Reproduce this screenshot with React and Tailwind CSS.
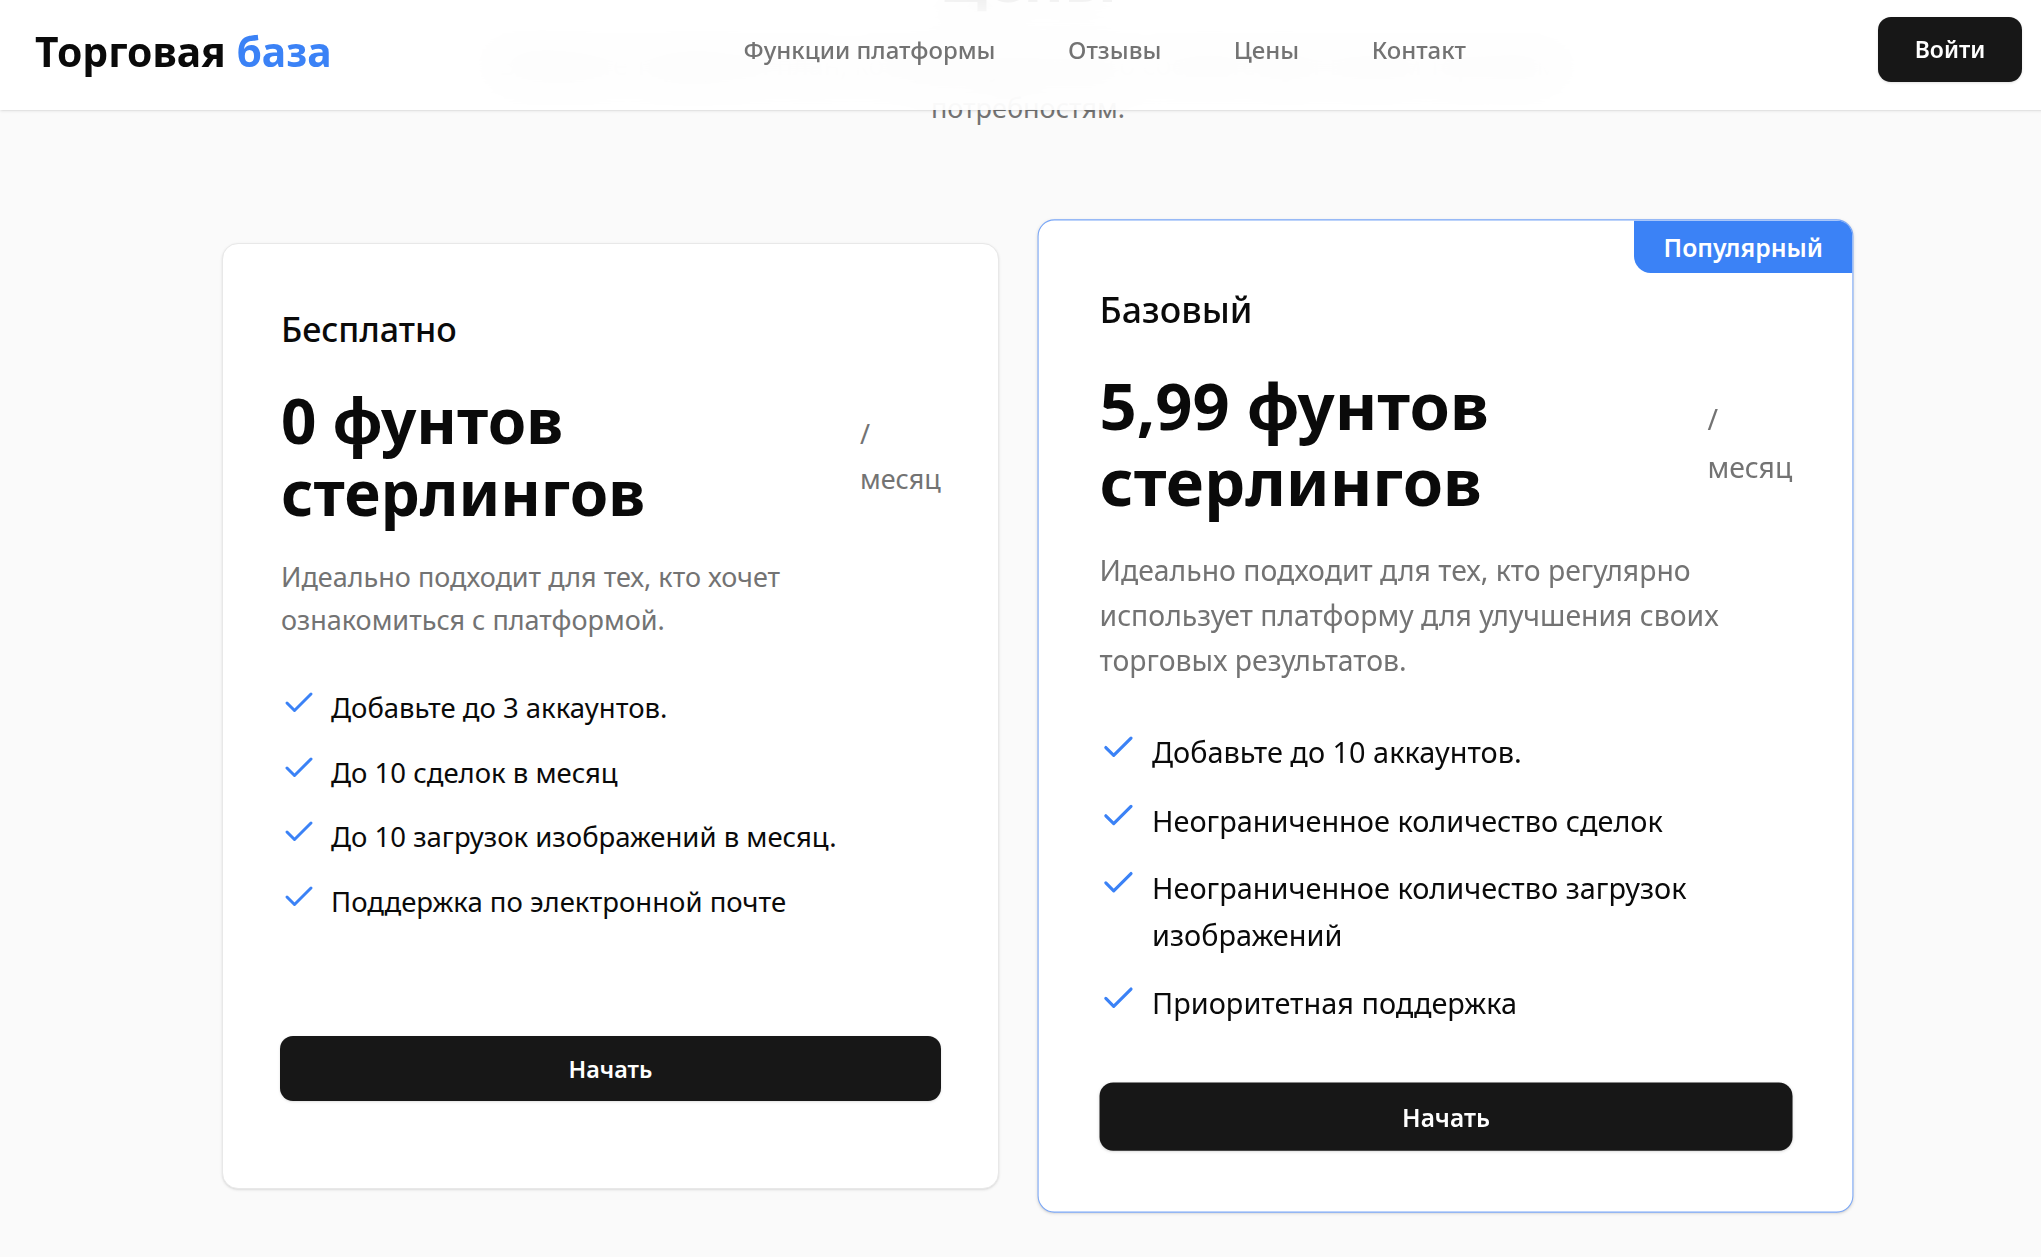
import { Check } from "lucide-react"

const navItems = ["Функции платформы", "Отзывы", "Цены", "Контакт"]

const plans = [
  {
    title: "Бесплатно",
    price: "0 фунтов стерлингов",
    description: "Идеально подходит для тех, кто хочет ознакомиться с платформой.",
    features: [
      "Добавьте до 3 аккаунтов.",
      "До 10 сделок в месяц",
      "До 10 загрузок изображений в месяц.",
      "Поддержка по электронной почте",
    ],
  },
  {
    title: "Базовый",
    price: "5,99 фунтов стерлингов",
    description: "Идеально подходит для тех, кто регулярно использует платформу для улучшения своих торговых результатов.",
    features: [
      "Добавьте до 10 аккаунтов.",
      "Неограниченное количество сделок",
      "Неограниченное количество загрузок изображений",
      "Приоритетная поддержка",
    ],
    popular: true,
  },
]

function PlanCard({ plan }) {
  return (
    <div
      className={`relative flex flex-col overflow-hidden rounded-[16px] bg-white px-[58px] pt-[62px] shadow-sm ${
        plan.popular ? "scale-105 border-[1.5px] border-[#7aa7f7] pb-[58px] shadow-lg" : "border border-[#e8e8e8] pb-[87px]"
      }`}
    >
      {plan.popular && (
        <div className="absolute right-0 top-0 rounded-bl-[16px] bg-[#3b82f6] px-[28px] pb-[9px] pt-[11px] text-[23.6px] leading-[30px] font-semibold text-white">
          Популярный
        </div>
      )}
      <h3 className="text-[34px] leading-[46px] font-medium text-[#0a0a0a]">{plan.title}</h3>
      <div className="mt-[32px] flex items-baseline justify-between">
        <span className="w-[470px] text-[62px] leading-[72px] font-bold text-[#0a0a0a]">{plan.price}</span>
        <span className="w-[80px] text-[27px] leading-[45px] text-[#737373]">/ месяц</span>
      </div>
      <p className="mt-[27px] text-[27px] leading-[43px] text-[#737373]">{plan.description}</p>
      <ul className="mt-[44px] mb-[53px] flex flex-col gap-[19.5px]">
        {plan.features.map((feature) => (
          <li key={feature} className="flex items-start gap-[14px] text-[27.5px] leading-[45px] text-[#0a0a0a]">
            <Check size={36} strokeWidth={2} className="shrink-0 text-[#3b82f6]" />
            <span>{feature}</span>
          </li>
        ))}
      </ul>
      <button
        className={`mt-auto h-[65px] rounded-[13px] bg-[#171717] pt-[2px] text-[23.3px] font-semibold text-white shadow-sm ${
          plan.popular ? "-mr-[1px]" : "-mx-[1px]"
        }`}
      >
        Начать
      </button>
    </div>
  )
}

export default function App() {
  return (
    <div
      className="relative h-[1257px] w-full overflow-hidden bg-[#fafafa]"
      style={{ fontFamily: '"Noto Sans", sans-serif' }}
    >
      <header className="absolute left-0 top-0 z-10 flex h-[110px] w-[2056px] items-center justify-between bg-white/90 pb-[11px] pl-[35px] pr-[34px] shadow-sm backdrop-blur-[20px]">
        <div className="mt-[3px] text-[40.8px] leading-none font-bold text-[#0a0a0a]">
          Торговая <span className="text-[#3b82f6]">база</span>
        </div>
        <nav className="flex items-center gap-[72.5px] text-[24px] font-medium text-[#737373]">
          {navItems.map((item) => (
            <a key={item} href="#">{item}</a>
          ))}
        </nav>
        <button className="h-[65px] w-[144px] rounded-[13px] bg-[#171717] text-[23px] font-semibold text-white shadow-sm">
          Войти
        </button>
      </header>

      <main className="flex w-[2056px] flex-col items-center">
        <div className="mt-[-58px] text-center">
          <h2 className="text-[62px] leading-[72px] font-bold text-[#0a0a0a]">Цены</h2>
          <p className="mt-[29px] w-[1100px] text-[27px] leading-[43px] text-[#737373]">
            Выберите тарифный план, который лучше всего соответствует вашим торговым потребностям.
          </p>
        </div>
        <div className="mt-[114px] grid w-[1612px] grid-cols-2 gap-[58px]">
          {plans.map((plan) => (
            <PlanCard key={plan.title} plan={plan} />
          ))}
        </div>
      </main>
    </div>
  )
}
